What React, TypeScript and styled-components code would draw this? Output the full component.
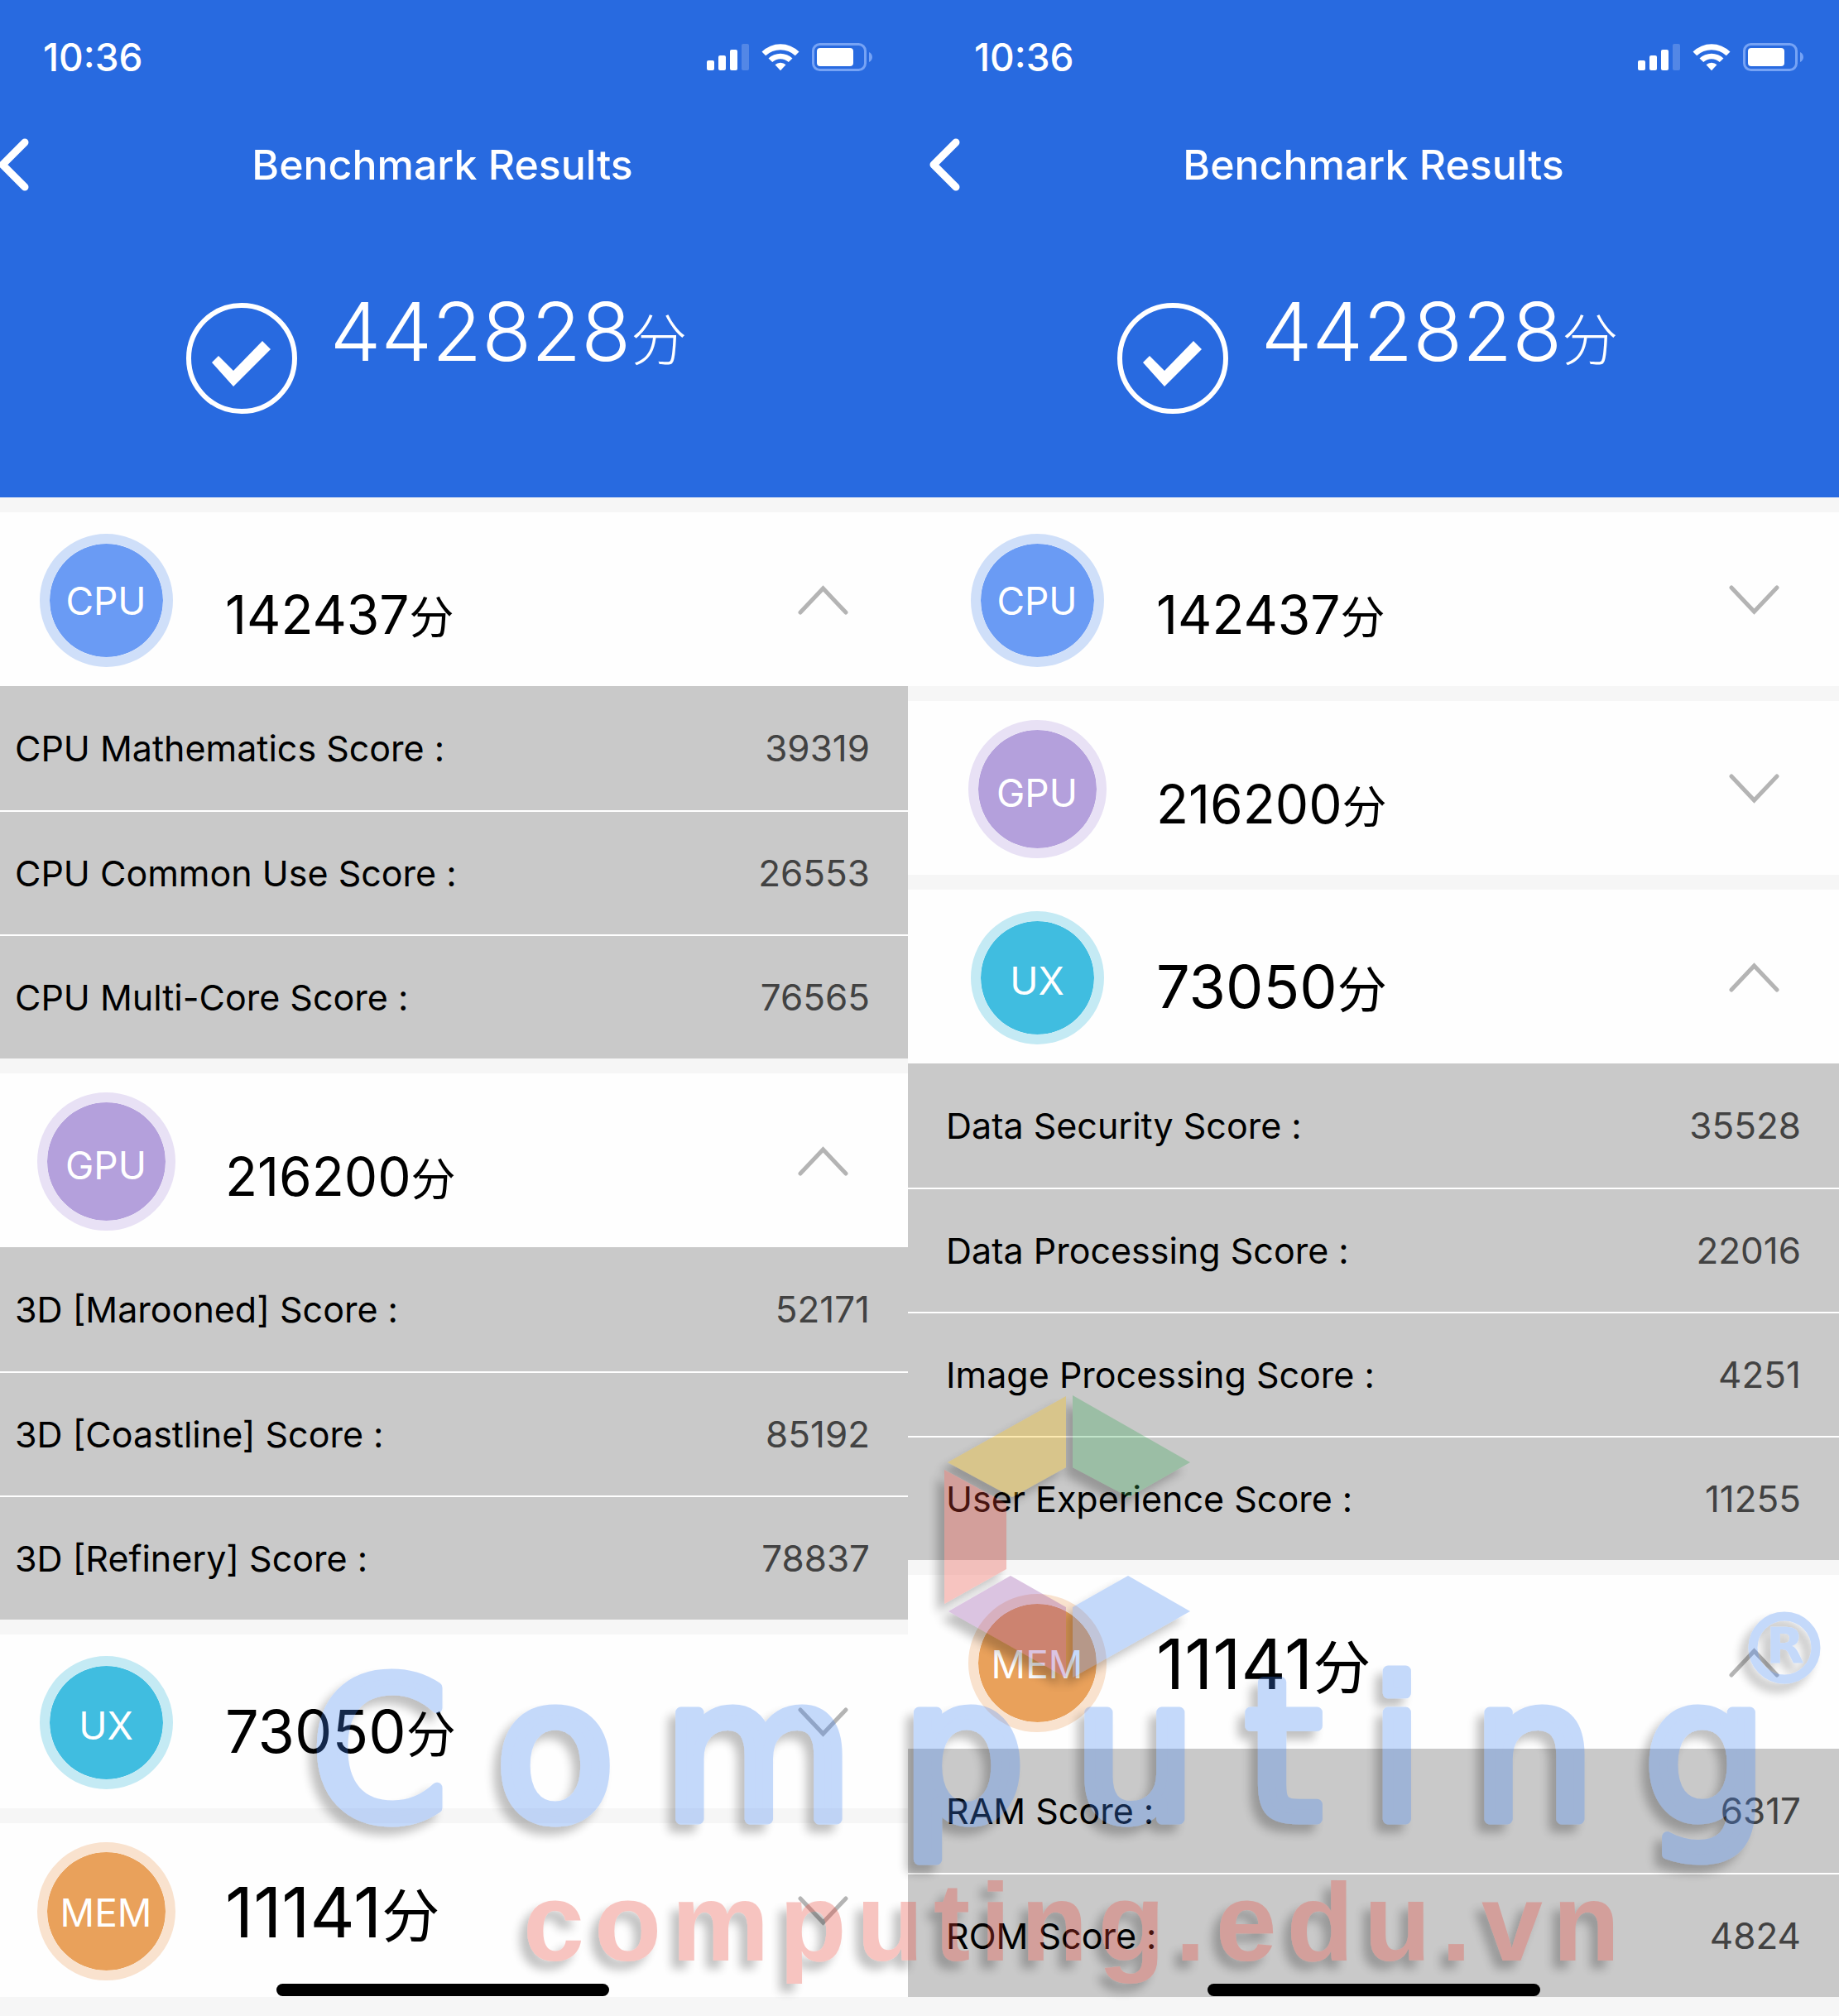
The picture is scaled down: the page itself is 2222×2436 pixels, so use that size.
import React, { useState } from "react";
import styled, { createGlobalStyle } from "styled-components";

const GlobalStyle = createGlobalStyle`
  *, *::before, *::after { box-sizing: border-box; }
  body {
    margin: 0;
    background: #f6f6f6;
    color: #000;
    font-family: Inter, "Noto Sans CJK SC", sans-serif;
  }
  button { font: inherit; color: inherit; border: 0; padding: 0; cursor: pointer; }
`;

const CLIP = 28;

const Page = styled.main`
  position: relative;
  display: grid;
  grid-template-columns: calc(50% - ${CLIP / 2}px) 1fr;
  padding-bottom: 23px;
`;

const Pane = styled.section`
  position: relative;
  overflow: hidden;
`;

const Screen = styled.div<{ $clipped: boolean }>`
  margin-left: ${(p) => (p.$clipped ? -CLIP : 0)}px;
  position: relative;
`;

const Header = styled.header`
  background: #286ae0;
  color: #fff;
  height: 601px;
`;

const StatusBar = styled.div`
  display: flex;
  align-items: center;
  justify-content: space-between;
  height: 138px;
  padding: 0 43px 0 80px;
  font-size: 46px;
  font-weight: 500;
`;

const StatusIcons = styled.svg`
  display: block;
  width: 200px;
  height: 34px;
`;

const TitleBar = styled.div`
  display: grid;
  grid-template-columns: 80px 1fr 80px;
  align-items: center;
  height: 122px;
`;

const BackButton = styled.button`
  background: none;
  height: 100px;
  padding-left: 26px;
  svg { display: block; }
`;

const Title = styled.h1`
  margin: 0;
  text-align: center;
  font-size: 50px;
  font-weight: 500;
  line-height: 60px;
`;

const Hero = styled.div`
  display: flex;
  justify-content: center;
  align-items: flex-start;
  gap: 40px;
  padding: 92px 14px 0 0;
`;

const CheckIcon = styled.svg`
  flex: none;
  width: 134px;
  height: 136px;
  margin-top: 13px;
`;

const Points = styled.span<{ $size: number; $unit: number; $drop?: number; $weight?: number }>`
  display: flex;
  align-items: baseline;
  padding-top: ${(p) => p.$drop ?? 0}px;
  font-size: ${(p) => p.$size}px;
  font-weight: ${(p) => p.$weight ?? 400};
  line-height: 1;
  small {
    font-family: "Noto Sans CJK SC", sans-serif;
    font-size: ${(p) => p.$unit}px;
    font-weight: ${(p) => p.$weight ?? 400};
    line-height: 1;
  }
`;

const Group = styled.section`
  margin-top: 18px;
`;

const GroupButton = styled.button`
  display: flex;
  align-items: center;
  width: 100%;
  height: 210px;
  padding: 2px 72px 0;
  background: #fefefe;
  text-align: left;
`;

const BadgeSlot = styled.span`
  display: flex;
  justify-content: center;
  flex: none;
  width: 168px;
  margin-right: 60px;
`;

const Badge = styled.span<{ $size: number; $fill: string; $ring: string; $drop: number }>`
  display: flex;
  align-items: center;
  justify-content: center;
  width: ${(p) => p.$size}px;
  height: ${(p) => p.$size}px;
  padding-top: ${(p) => p.$drop}px;
  border: 12px solid ${(p) => p.$ring};
  border-radius: 50%;
  background: ${(p) => p.$fill};
  background-clip: padding-box;
  color: #fff;
  font-size: 46px;
  line-height: 1;
`;

const Chevron = styled.svg`
  display: block;
  flex: none;
  width: 61px;
  height: 36px;
  margin-left: auto;
`;

const Details = styled.dl`
  margin: 0;
  background: #c9c9c9;
`;

const Detail = styled.div`
  display: flex;
  align-items: center;
  justify-content: space-between;
  height: 150px;
  padding: 0 46px;
  font-size: 43px;
  & + & { border-top: 2px solid #fff; }
  dd { margin: 0; color: #424242; font-size: 44px; }
`;

const HomeIndicator = styled.div`
  position: absolute;
  bottom: 1px;
  left: 50%;
  width: 402px;
  height: 15px;
  margin-left: -201px;
  border-radius: 8px;
  background: #000;
`;

const Watermark = styled.svg`
  position: absolute;
  left: 0;
  bottom: 0;
  width: 100%;
  pointer-events: none;
  opacity: 0.3;
`;

type Kind = "CPU" | "GPU" | "UX" | "MEM";

interface GroupInfo {
  points: string;
  size: number;
  unit: number;
  drop: number;
  badge: { size: number; fill: string; ring: string; drop: number };
  details: [string, string][];
}

const groups: Record<Kind, GroupInfo> = {
  CPU: {
    points: "142437",
    size: 64,
    unit: 54,
    drop: 36,
    badge: { size: 161, fill: "#6a9bf4", ring: "#cfdff9", drop: 2 },
    details: [
      ["CPU Mathematics Score :", "39319"],
      ["CPU Common Use Score :", "26553"],
      ["CPU Multi-Core Score :", "76565"],
    ],
  },
  GPU: {
    points: "216200",
    size: 64,
    unit: 54,
    drop: 38,
    badge: { size: 167, fill: "#b4a0dc", ring: "#e8e1f5", drop: 10 },
    details: [
      ["3D [Marooned] Score :", "52171"],
      ["3D [Coastline] Score :", "85192"],
      ["3D [Refinery] Score :", "78837"],
    ],
  },
  UX: {
    points: "73050",
    size: 72,
    unit: 60,
    drop: 22,
    badge: { size: 161, fill: "#40bde0", ring: "#c4eaf4", drop: 8 },
    details: [
      ["Data Security Score :", "35528"],
      ["Data Processing Score :", "22016"],
      ["Image Processing Score :", "4251"],
      ["User Experience Score :", "11255"],
    ],
  },
  MEM: {
    points: "11141",
    size: 84,
    unit: 70,
    drop: 4,
    badge: { size: 167, fill: "#e9a15b", ring: "#f9e2ce", drop: 4 },
    details: [
      ["RAM Score :", "6317"],
      ["ROM Score :", "4824"],
    ],
  },
};

const kinds: Kind[] = ["CPU", "GPU", "UX", "MEM"];

function ScoreGroup({ kind, initiallyOpen }: { kind: Kind; initiallyOpen: boolean }) {
  const [open, setOpen] = useState(initiallyOpen);
  const g = groups[kind];
  return (
    <Group>
      <GroupButton type="button" aria-expanded={open} onClick={() => setOpen(!open)}>
        <BadgeSlot>
          <Badge $size={g.badge.size} $fill={g.badge.fill} $ring={g.badge.ring} $drop={g.badge.drop}>
            {kind}
          </Badge>
        </BadgeSlot>
        <Points $size={g.size} $unit={g.unit} $drop={g.drop}>
          {g.points}
          <small>分</small>
        </Points>
        <Chevron viewBox="0 0 61 36" fill="none" stroke="#b4b4b4" strokeWidth="5" strokeLinecap="round" aria-hidden="true">
          <path d={open ? "M3 33 30.500 4 58 33" : "M3 3 30.500 32 58 3"} />
        </Chevron>
      </GroupButton>
      {open && (
        <Details>
          {g.details.map(([label, value]) => (
            <Detail key={label}>
              <dt>{label}</dt>
              <dd>{value}</dd>
            </Detail>
          ))}
        </Details>
      )}
    </Group>
  );
}

function ResultScreen({ clipped, open }: { clipped: boolean; open: Kind[] }) {
  return (
    <Pane>
      <Screen $clipped={clipped}>
        <Header>
          <StatusBar>
            <time>10:36</time>
            <StatusIcons viewBox="0 0 200 34" fill="#fff" aria-hidden="true">
              <rect x="0" y="21" width="9" height="12" rx="2" />
              <rect x="14" y="15" width="9" height="18" rx="2" />
              <rect x="28" y="8" width="9" height="25" rx="2" />
              <rect x="42" y="1" width="9" height="32" rx="2" opacity="0.2" />
              <path d="M66.500 10.500a32 32 0 0 1 45 0l-4.700 4.800a26 26 0 0 0-35.600 0z" />
              <path d="M74.500 18.500a21 21 0 0 1 29 0l-4.700 4.600a14.500 14.500 0 0 0-19.600 0z" />
              <path d="M82.500 26.300a9.500 9.500 0 0 1 13 0L89 33.200z" />
              <rect x="128.500" y="1.500" width="63" height="31" rx="8" fill="none" stroke="#76a3f5" strokeWidth="3" />
              <rect x="133" y="6" width="44" height="22" rx="4" />
              <path d="M196 11c5.300 2 5.300 10 0 12z" fill="#76a3f5" />
            </StatusIcons>
          </StatusBar>
          <TitleBar>
            <BackButton type="button" aria-label="Back">
              <svg width="37" height="64" viewBox="0 0 37 64" fill="none" stroke="#fff" strokeWidth="9" strokeLinecap="round" strokeLinejoin="round">
                <path d="M32 5 5 32l27 27" />
              </svg>
            </BackButton>
            <Title>Benchmark Results</Title>
          </TitleBar>
          <Hero>
            <CheckIcon viewBox="0 0 134 136" aria-hidden="true">
              <circle cx="67" cy="68" r="64" fill="none" stroke="#fff" strokeWidth="6" />
              <path d="M31 73 39 65 57 83 92 47 102 57 57 102z" fill="#fff" />
            </CheckIcon>
            <Points $size={98} $unit={68} $weight={300}>
              442828
              <small>分</small>
            </Points>
          </Hero>
        </Header>
        {kinds.map((kind) => (
          <ScoreGroup key={kind} kind={kind} initiallyOpen={open.includes(kind)} />
        ))}
        <HomeIndicator />
      </Screen>
    </Pane>
  );
}

function ComputingMark() {
  return (
    <Watermark viewBox="0 1636 2222 800" role="img" aria-label="Computing, computing.edu.vn">
      <defs>
        <filter id="cast" filterUnits="userSpaceOnUse" x="0" y="1636" width="2222" height="800">
          <feDropShadow dx="-9" dy="10" stdDeviation="6" floodColor="#000" floodOpacity="0.8" />
        </filter>
      </defs>
      <g filter="url(#cast)">
        <path d="M1145 1767 1288 1687V1773L1223 1809z" fill="#fbbc05" />
        <path d="M1296 1686 1438 1767 1364 1809 1296 1773z" fill="#34a853" />
        <path d="M1141 1776 1216 1817V1896L1141 1938z" fill="#ea4335" />
        <path d="M1146 1947 1221 1904 1288 1942V2027z" fill="#8c3fa0" />
        <path d="M1296 1942 1363 1904 1438 1947 1296 2027z" fill="#4285f4" />
        <text
          x="376"
          y="2198"
          fill="#4285f4"
          stroke="#4285f4"
          strokeWidth="13"
          strokeLinejoin="round"
          fontFamily="DejaVu Sans"
          fontSize="236"
          letterSpacing="58"
        >
          Computing
        </text>
        <circle cx="2156" cy="1991" r="38" fill="none" stroke="#4285f4" strokeWidth="11" />
        <text x="2157" y="2010" textAnchor="middle" fill="#4285f4" fontFamily="DejaVu Sans" fontWeight="700" fontSize="60">
          R
        </text>
        <text x="632" y="2369" fill="#ea4335" fontFamily="Liberation Sans" fontWeight="700" fontSize="133" letterSpacing="12">
          computing.edu.vn
        </text>
      </g>
    </Watermark>
  );
}

export default function App() {
  return (
    <>
      <GlobalStyle />
      <Page>
        <ResultScreen clipped open={["CPU", "GPU"]} />
        <ResultScreen clipped={false} open={["UX", "MEM"]} />
        <ComputingMark />
      </Page>
    </>
  );
}
